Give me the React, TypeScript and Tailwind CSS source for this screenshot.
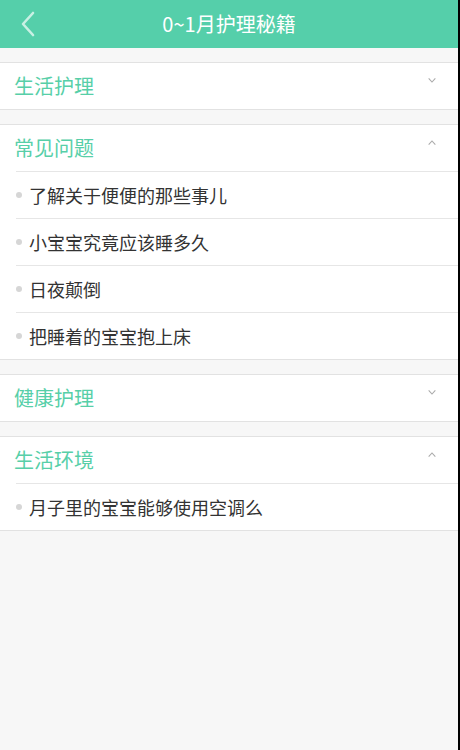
import { Fragment } from "react";

type Section = {
  title: string;
  open: boolean;
  items: string[];
};

const sections: Section[] = [
  { title: "生活护理", open: false, items: [] },
  {
    title: "常见问题",
    open: true,
    items: ["了解关于便便的那些事儿", "小宝宝究竟应该睡多久", "日夜颠倒", "把睡着的宝宝抱上床"],
  },
  { title: "健康护理", open: false, items: [] },
  { title: "生活环境", open: true, items: ["月子里的宝宝能够使用空调么"] },
];

const font = { fontFamily: '"Noto Sans CJK SC", "Noto Sans", sans-serif' };

function Chevron({ up }: { up: boolean }) {
  return (
    <svg viewBox="0 0 10 6" className="h-[5px] w-[10px] text-[#aaaaaa]" fill="none" stroke="currentColor" strokeWidth="1.3">
      <path d={up ? "M1 5.5L5 1.2L9 5.5" : "M1 0.5L5 4.8L9 0.5"} />
    </svg>
  );
}

function SectionBlock({ section }: { section: Section }) {
  return (
    <div className="mt-[14px] border-y border-[#e2e2e2] bg-white">
      <div className="relative flex h-[46px] items-center pl-[14px]">
        <span className="text-[20px] leading-none text-[#57cfa8]">{section.title}</span>
        <span className="absolute right-[21px] top-[15px] flex">
          <Chevron up={section.open} />
        </span>
      </div>
      {section.items.map((item) => (
        <Fragment key={item}>
          <div className="ml-[16px] h-px bg-[#e6e6e6]" />
          <div className="flex h-[46px] items-center pl-[16px]">
            <span className="mr-[7px] h-[6px] w-[6px] rounded-full bg-[#d6d6d6]" />
            <span className="text-[18px] leading-none text-[#333333]">{item}</span>
          </div>
        </Fragment>
      ))}
    </div>
  );
}

export default function App() {
  return (
    <div className="flex h-[750px] w-[460px] overflow-hidden" style={font}>
      <div className="flex w-[458px] flex-col bg-[#f7f7f7]">
        <header className="relative flex h-[48px] items-center justify-center bg-[#55cfaa]">
          <svg viewBox="0 0 16 26" className="absolute left-[20px] top-[11px] h-[26px] w-[16px]" fill="none" stroke="#c9f0e4" strokeWidth="2.6" strokeLinecap="round" strokeLinejoin="round">
            <path d="M13 2L3 13L13 24" />
          </svg>
          <h1 className="text-[20px] font-normal leading-none text-white">0~1月护理秘籍</h1>
        </header>
        {sections.map((s) => (
          <SectionBlock key={s.title} section={s} />
        ))}
      </div>
      <div className="w-[2px] bg-black" />
    </div>
  );
}
